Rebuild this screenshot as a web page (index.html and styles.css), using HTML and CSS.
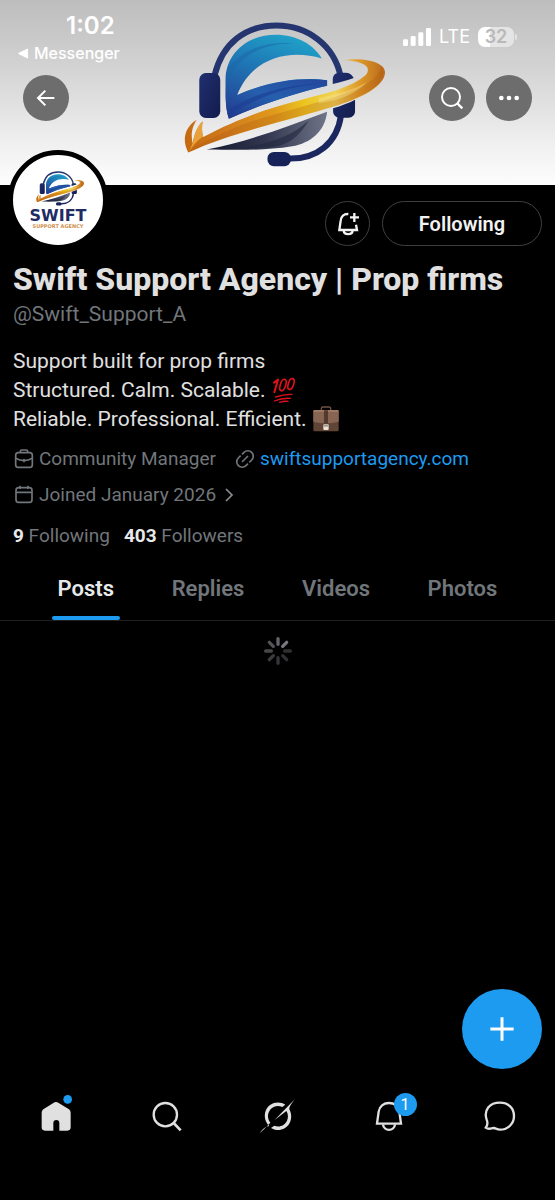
FILE: index.html
```html
<!DOCTYPE html>
<html lang="en">
<head>
<meta charset="utf-8">
<meta name="viewport" content="width=device-width, initial-scale=1">
<title>Swift Support Agency | Prop firms</title>
<link rel="stylesheet" href="styles.css">
</head>
<body>
<svg class="defs" aria-hidden="true">
  <defs>
    <linearGradient id="g-ring" x1="0" y1="0" x2="1" y2="0">
      <stop offset="0" stop-color="#c4690f"/><stop offset=".2" stop-color="#d07a1c"/><stop offset=".45" stop-color="#e09a1c"/>
      <stop offset=".6" stop-color="#ecc520"/><stop offset=".75" stop-color="#f0d458"/><stop offset=".87" stop-color="#dd9a2a"/><stop offset="1" stop-color="#b9681a"/>
    </linearGradient>
    <linearGradient id="g-globe" x1=".6" y1="0" x2=".2" y2="1">
      <stop offset="0" stop-color="#1fa0c8"/><stop offset=".45" stop-color="#1f74b4"/><stop offset="1" stop-color="#253f93"/>
    </linearGradient>
    <linearGradient id="g-mid" x1="1" y1="0" x2="0" y2="1">
      <stop offset="0" stop-color="#24469c"/><stop offset=".5" stop-color="#2560ad"/><stop offset="1" stop-color="#22368a"/>
    </linearGradient>
    <linearGradient id="g-dark" x1="0" y1="0" x2="1" y2="0">
      <stop offset="0" stop-color="#14182f"/><stop offset=".5" stop-color="#323850"/><stop offset="1" stop-color="#6f7488"/>
    </linearGradient>
    <linearGradient id="g-pad" x1="0" y1="0" x2="1" y2="1">
      <stop offset="0" stop-color="#202f70"/><stop offset="1" stop-color="#121c4c"/>
    </linearGradient>
  </defs>
  <symbol id="emblem" viewBox="-5 0 655 555">
    <path d="M132 226C155 130 225 76 318 76S490 135 510 226" fill="none" stroke="#25356f" stroke-width="18"/>
    <path d="M512 345C500 430 440 478 355 476" fill="none" stroke="#1b275f" stroke-width="18"/>
    <rect x="86" y="219" width="63" height="135" rx="20" fill="url(#g-pad)"/>
    <rect x="291" y="456" width="70" height="43" rx="19" fill="#172358"/>
    <path d="M487 252v-14c0-12 8-20 20-20h18c12 0 19 5 25 16-20 8-42 13-63 18zM488 325c25-8 47-16 66-26v34c0 12-8 20-20 20h-26c-12 0-20-8-20-20z" fill="url(#g-pad)"/>
    <path d="M175 356C162 320 165 270 165 230 172 150 240 104 315 104c65 0 115 30 139 71-98-29-209-3-254 110 90-40 190-56 270-44v16c-110 25-210 61-295 99z" fill="url(#g-globe)"/>
    <path d="M175 356c-9-25-10-55-9-85 5 20 15 30 34 15 90-40 190-56 270-45v16c-110 25-210 61-295 99z" fill="url(#g-mid)"/>
    <path d="M172 245c30-75 100-120 215-114-90-10-165 10-215 75z" fill="#1b68a5" opacity=".55"/>
    <path d="M174 330c65-45 180-80 292-80-110 5-210 45-290 95z" fill="#1d3f93" opacity=".65"/>
    <path d="M108 449C230 426 350 380 470 335c-6 60-50 94-105 104-90 15-180 10-257 10z" fill="url(#g-dark)"/>
    <path d="M205 445c80-10 155-32 210-83-30 50-60 72-110 80z" fill="#20263e" opacity=".6"/>
    <path d="M522 180c65-8 122 8 122 37 0 42-75 79-139 98C350 363 180 398 53 458 35 425 38 385 78 359c-18 30-16 50-12 72 6-32 15-52 30-66-3 20-2 34 2 46 100-52 180-82 282-108 90-25 160-38 207-79 20-27-15-40-65-44z" fill="url(#g-ring)"/>
    <path d="M55 456c35-30 75-43 120-65 120-52 245-70 370-119 50-20 80-40 88-72 27 47-52 88-128 115C350 363 180 398 55 456z" fill="#a94f10" opacity=".25"/>
    <path d="M66 430c6-32 15-52 30-66-3 20-2 34 2 46-14 10-25 18-43 46z" fill="#e9a13c"/>
    <path d="M445 294c65-12 105-25 145-48-40 42-90 55-145 64z" fill="#f9e79c" opacity=".4"/>
  </symbol>
</svg>

<div class="app">
  <header class="cover">
    <svg class="cover-art" role="img" aria-label="Swift Support Agency banner"><use href="#emblem"/></svg>
    <div class="status">
      <div class="status-left">
        <div class="time">1:02</div>
        <div class="return"><svg viewBox="0 0 12 12" class="tri"><path d="M11 1v10L1 6z" fill="#fff" stroke="#fff" stroke-linejoin="round"/></svg>Messenger</div>
      </div>
      <div class="status-right">
        <svg class="signal" viewBox="0 0 84 54"><g fill="#fff"><rect x="0" y="34" width="15" height="20" rx="4"/><rect x="23" y="24" width="15" height="30" rx="4"/><rect x="46" y="13" width="15" height="41" rx="4"/><rect x="69" y="0" width="15" height="54" rx="4"/></g></svg>
        <span class="network">LTE</span>
        <span class="battery">32</span>
      </div>
    </div>
    <div class="cover-nav">
      <button class="round" aria-label="Back"><svg viewBox="92 250 90 90"><path d="M162 295h-48M135 273l-22 22 22 22" fill="none" stroke="#fff" stroke-width="6"/></svg></button>
      <button class="round push" aria-label="Search"><svg viewBox="141 249 90 90"><circle cx="183" cy="291" r="27" fill="none" stroke="#fff" stroke-width="6"/><path d="M202 310l15 15" stroke="#fff" stroke-width="7"/></svg></button>
      <button class="round" aria-label="More"><svg viewBox="312 249 90 90"><g fill="#fff"><circle cx="334" cy="294" r="7"/><circle cx="357" cy="294" r="7"/><circle cx="380" cy="294" r="7"/></g></svg></button>
    </div>
  </header>

  <main>
    <section class="profile">
      <div class="profile-head">
        <div class="avatar">
          <svg class="avatar-art" aria-hidden="true"><use href="#emblem"/></svg>
          <span class="avatar-name">SWIFT</span>
          <span class="avatar-sub">SUPPORT AGENCY</span>
        </div>
        <div class="actions">
          <button class="notify" aria-label="Notifications for this account"><svg viewBox="66 85 90 90"><g fill="none" stroke="#f2f2f2" stroke-width="7"><path d="M112 100c-13-1-22 8-23 20l-4 28h53l-3-16"/><path d="M98 149c1 15 26 15 27 0M130 97v27M117 110h27"/></g></svg></button>
          <button class="following">Following</button>
        </div>
      </div>
      <h1>Swift Support Agency | Prop firms</h1>
      <p class="handle">@Swift_Support_A</p>
      <p class="bio">Support built for prop firms<br>
        Structured. Calm. Scalable.<svg class="emoji" viewBox="0 0 84 78" role="img" aria-label="hundred points"><g fill="none" stroke="#e0101c" stroke-linecap="round" stroke-linejoin="round"><path d="M12 17l12-9-11 38" stroke-width="6"/><g stroke-width="5"><ellipse cx="39" cy="24" rx="8" ry="18" transform="rotate(18 39 24)"/><ellipse cx="63" cy="21" rx="8" ry="17" transform="rotate(18 63 21)"/></g><path d="M17 60q25-9 49-8M13 72q24-10 48-8M29 76q12-4 25-3" stroke-width="4"/></g></svg><br>
        Reliable. Professional. Efficient.<svg class="emoji" viewBox="0 0 84 78" role="img" aria-label="briefcase"><path d="M28 15V8q0-5 5-5h18q5 0 5 5v7" fill="none" stroke="#6d5344" stroke-width="4"/><rect x="4" y="12" width="76" height="64" rx="4" fill="#604536"/><path d="M4 16q0-4 4-4h68q4 0 4 4v31q-38 9-76 0z" fill="#886553"/><path d="M5 15h74" stroke="#b08c78" stroke-width="3"/><path d="M36 13h12v40H36z" fill="#533a2d"/><rect x="34" y="55" width="16" height="17" rx="3" fill="#eee4da"/><path d="M34 56h16v6H34z" fill="#a4978c"/></svg></p>
      <div class="meta">
        <span class="meta-item"><svg viewBox="39 33 66 72"><g fill="none" stroke="#71767b" stroke-width="5"><rect x="47" y="50" width="50" height="44" rx="8"/><path d="M61 49v-3q0-4 4-4h14q4 0 4 4v3M47 67q25 14 50 0M72 69v10"/></g></svg>Community Manager</span>
        <span class="meta-item"><svg viewBox="702 33 66 72"><g fill="none" stroke="#71767b" stroke-width="5"><path d="M726 55l6-6a16 16 0 0 1 23 23l-7 7"/><path d="M722 59l-7 7a16 16 0 0 0 23 23l6-6M726 78l18-18"/></g></svg><a href="#site">swiftsupportagency.com</a></span>
        <span class="meta-item"><svg viewBox="39 144 66 72"><g fill="none" stroke="#71767b" stroke-width="5"><rect x="48" y="158" width="48" height="44" rx="8"/><path d="M48 172h48M60 152v10M84 152v10"/></g></svg>Joined January 2026<svg class="chev" viewBox="0 0 30 42"><path d="M6 3l18 18L6 39" fill="none" stroke="#8b8f94" stroke-width="5"/></svg></span>
      </div>
      <div class="counts">
        <a href="#following"><b>9</b> Following</a>
        <a href="#followers"><b>403</b> Followers</a>
      </div>
    </section>

    <div class="tabs" role="tablist">
      <button role="tab" aria-selected="true">Posts</button>
      <button role="tab" aria-selected="false">Replies</button>
      <button role="tab" aria-selected="false">Videos</button>
      <button role="tab" aria-selected="false">Photos</button>
    </div>
    <svg class="spinner" viewBox="-42 -42 84 84" role="img" aria-label="Loading">
      <g stroke-width="10" stroke-linecap="round">
        <path d="M0-20v-17" stroke="#64646a"/><path d="M14-14l12-12" stroke="#77777d"/><path d="M20 0h17" stroke="#303033"/><path d="M14 14l12 12" stroke="#303033"/>
        <path d="M0 20v17" stroke="#353538"/><path d="M-14 14l-12 12" stroke="#3c3c40"/><path d="M-20 0h-17" stroke="#47474b"/><path d="M-14-14l-12-12" stroke="#535358"/>
      </g>
    </svg>
  </main>

  <button class="compose" aria-label="New post"><svg viewBox="0 0 72 72"><path d="M36 1v70M1 36h70" stroke="#fff" stroke-width="9"/></svg></button>

  <nav class="tabbar" aria-label="Main">
    <a href="#home" aria-label="Home"><svg viewBox="112 60 108 96"><path d="M158 69q8-6 16 0l31 19q5 4 5 10v44q0 10-10 10h-24v-23q0-9-9-9t-9 9v23h-25q-10 0-10-10V98q0-6 5-10z" fill="#e0e0e0"/><circle cx="201" cy="58" r="13" fill="#1d9bf0"/></svg></a>
    <a href="#explore" aria-label="Search"><svg viewBox="445 60 108 96"><circle cx="494" cy="104" r="35" fill="none" stroke="#e0e0e0" stroke-width="7"/><path d="M519 129l21 22" stroke="#e0e0e0" stroke-width="8"/></svg></a>
    <a href="#grok" aria-label="Grok"><svg viewBox="58 60 108 96"><path d="M86 138C67 121 68 90 88 75c15-11 34-9 46-1l-9 7c-11-5-22-4-31 3-15 12-15 32-5 44-8 9-18 19-32 32 9-13 19-22 29-22zM163 57c-12 16-17 22-17 31 12 22 4 47-14 57-14 8-30 6-41-1l10-7c9 4 19 3 27-2 14-9 18-28 9-42l-36 28z" fill="#e0e0e0"/></svg></a>
    <a href="#notifications" aria-label="Notifications"><svg viewBox="391 60 108 96"><g fill="none" stroke="#e0e0e0" stroke-width="7"><path d="M409 131h72l-5-36c-3-17-16-26-31-26s-28 9-31 26z"/><path d="M427 133c2 22 34 22 36 0"/></g></svg><span class="badge">1</span></a>
    <a href="#messages" aria-label="Messages"><svg viewBox="724 60 108 96"><path d="M735 143c7-8 7-14 3-24-10-30 9-51 40-51 25 0 42 17 42 40s-18 41-42 41c-8 0-13-4-18-5-7-1-14 7-25-1z" fill="none" stroke="#e0e0e0" stroke-width="7" stroke-linejoin="round"/></svg></a>
  </nav>
</div>
</body>
</html>
```
FILE: styles.css
```css
* { box-sizing: border-box; }
body { margin: 0; background: #000; color: #e0e0e0; font-family: Roboto, "Liberation Sans", sans-serif; font-size: 20px; line-height: 24px; }
button { font: inherit; color: inherit; background: none; border: 0; padding: 0; cursor: pointer; }
a { color: inherit; text-decoration: none; }
p, h1 { margin: 0; }
svg { display: block; overflow: visible; }
.defs { position: absolute; width: 0; height: 0; }
.app { display: flex; flex-direction: column; min-height: 100vh; }
main { flex: 1; }

.cover { position: relative; padding: 13px 23px 64px; background: linear-gradient(#bdbdbd 0, #d2d2d2 35%, #f0f0f0 78%, #fdfdfd 100%); }
.cover-art { position: absolute; top: 0; left: 50%; width: 218px; height: 185px; transform: translateX(-50%); }
.status { display: flex; justify-content: space-between; height: 62px; margin: 0 16px 0 -6px; color: #fff; font-family: Inter, sans-serif; }
.status-left, .status-right { position: relative; }
.time { padding-left: 49px; font-size: 24px; line-height: 26px; font-weight: 600; }
.return { display: flex; align-items: center; gap: 5px; padding-top: 4px; font-size: 16px; line-height: 20px; font-weight: 500; }
.tri { width: 12px; height: 11px; }
.status-right { display: flex; align-items: center; gap: 8px; height: 48px; }
.signal { width: 28px; height: 18px; }
.network { font-size: 18px; }
.battery { position: relative; width: 36px; height: 20px; margin-right: 2px; border-radius: 7px; background: linear-gradient(90deg, #fff 32%, #e4e4e4 32%); color: #b9b9b9; font-size: 18px; line-height: 20px; font-weight: 600; text-align: center; }
.battery::after { content: ""; position: absolute; right: -3px; top: 7px; width: 2px; height: 6px; border-radius: 0 3px 3px 0; background: #e4e4e4; }
.cover-nav { position: relative; display: flex; gap: 11px; }
.round { display: grid; place-items: center; width: 46px; height: 46px; border-radius: 50%; background: #6d6d6d; }
.round svg { width: 30px; height: 30px; }
.push { margin-left: auto; }

.profile { padding: 0 13px; }
.profile-head { display: flex; justify-content: space-between; align-items: flex-start; }
.avatar { position: relative; display: flex; flex-direction: column; align-items: center; width: 100px; height: 100px; margin: -35px 0 0 -5px; padding-top: 11px; border: 5px solid #000; border-radius: 50%; background: #fff; color: #202b63; font-family: "DejaVu Sans", sans-serif; font-weight: 700; }
.avatar-art { width: 53px; height: 44px; }
.avatar-name { font-size: 16px; line-height: 12px; }
.avatar-sub { padding-top: 2px; font-size: 5px; line-height: 5px; color: #cf8f4e; }
.actions { display: flex; gap: 12px; padding-top: 16px; }
.actions button { height: 45px; border: 1px solid #3c3f42; border-radius: 23px; }
.notify { display: grid; place-items: center; width: 45px; }
.notify svg { width: 30px; height: 30px; }
.actions .following { width: 160px; color: #f2f2f2; font-weight: 600; }
h1 { padding-top: 11px; font-size: 32px; line-height: 36px; font-weight: 800; }
.handle { padding-top: 5px; color: #71767b; font-size: 21px; }
.bio { padding-top: 21px; font-size: 21px; line-height: 29px; }
.emoji { display: inline-block; width: 28px; height: 26px; margin-left: 5px; vertical-align: -6px; }
.meta { display: flex; flex-wrap: wrap; gap: 12px 18px; padding-top: 13px; color: #71767b; font-size: 19px; }
.meta-item { display: flex; align-items: center; gap: 4px; }
.meta-item svg { width: 22px; height: 24px; }
.meta-item .chev { width: 10px; height: 14px; margin-left: 4px; }
.meta a { color: #1d9bf0; }
.counts { display: flex; gap: 14px; padding-top: 17px; color: #71767b; font-size: 19px; }
.counts b { color: #e7e9ea; }

.tabs { display: flex; justify-content: space-evenly; margin-top: 9px; border-bottom: 1px solid #1d1f21; color: #71767b; font-size: 22px; font-weight: 600; }
.tabs button { position: relative; height: 63px; }
.tabs [aria-selected="true"] { color: #e7e9ea; }
.tabs [aria-selected="true"]::after { content: ""; position: absolute; left: -6px; right: -6px; bottom: 0; height: 4px; border-radius: 2px; background: #1d9bf0; }
.spinner { width: 28px; height: 28px; margin: 16px auto; }

.compose { position: fixed; right: 13px; bottom: 131px; display: grid; place-items: center; width: 80px; height: 80px; border-radius: 50%; background: #1d9bf0; }
.compose svg { width: 24px; height: 24px; }
.tabbar { display: grid; grid-template-columns: repeat(5, 1fr); padding-bottom: 68px; }
.tabbar a { position: relative; display: grid; justify-items: center; }
.tabbar svg { width: 36px; height: 32px; }
.badge { position: absolute; left: 50%; top: -7px; width: 23px; height: 23px; margin-left: 5px; border-radius: 50%; background: #1d9bf0; color: #fff; font-size: 16px; line-height: 23px; text-align: center; }
```
